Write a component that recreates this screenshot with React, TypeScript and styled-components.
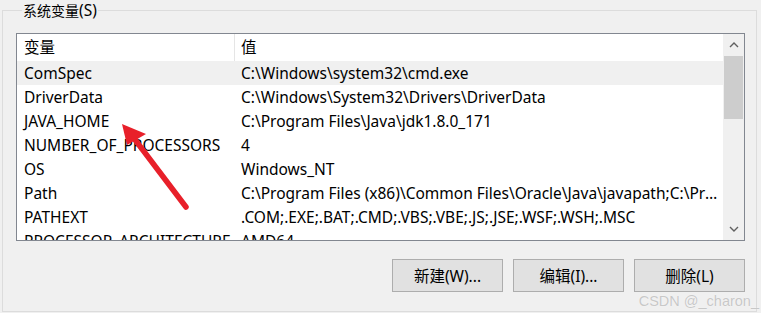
import * as React from 'react';
import styled, { createGlobalStyle } from 'styled-components';

const GlobalStyle = createGlobalStyle`
    html, body {
        margin: 0;
        padding: 0;
        background: #f0f0f0;
    }
    body {
        font-family: "Noto Sans", "Noto Sans CJK SC", sans-serif;
        font-size: 15.5px;
        color: #000;
    }
`;

const Page = styled.div`
    position: relative;
    width: 761px;
    height: 313px;
    overflow: hidden;
    background: #f0f0f0;
`;

const GroupBox = styled.fieldset`
    box-sizing: border-box;
    width: 755px;
    height: 312px;
    margin: 0 0 0 2px;
    padding: 0 0 0 13px;
    border: 1px solid #dcdcdc;
    display: flex;
    flex-direction: column;
`;

const GroupTitle = styled.legend`
    margin-left: 6px;
    padding: 0 1px;
    line-height: 20px;
    font-size: 15.5px;
`;

const Han = styled.span`
    font-size: 14px;
`;

const ListBox = styled.div`
    box-sizing: border-box;
    width: 729px;
    height: 208px;
    margin-top: 12px;
    border: 1px solid #828790;
    background: #fff;
    display: flex;
`;

const ListMain = styled.div`
    flex: 1;
    overflow: hidden;
`;

const HeaderRow = styled.div`
    display: grid;
    grid-template-columns: 217px 1fr;
    height: 27px;
    line-height: 27px;
    background: #fff;
`;

const Row = styled.div<{ $selected?: boolean }>`
    display: grid;
    grid-template-columns: 217px 1fr;
    height: 24px;
    line-height: 24px;
    background: ${p => (p.$selected ? '#f0f0f0' : '#fff')};
`;

const NameCell = styled.div`
    padding-left: 7px;
    white-space: nowrap;
    overflow: hidden;
`;

const ValueCell = styled.div<{ $header?: boolean }>`
    border-left: 1px solid ${p => (p.$header ? '#e5e5e5' : 'transparent')};
    padding: 0 3px 0 6px;
    white-space: nowrap;
    overflow: hidden;
    text-overflow: ellipsis;
`;

const Scrollbar = styled.div`
    width: 21px;
    background: #f0f0f0;
    display: flex;
    flex-direction: column;
`;

const ScrollArrow = styled.div`
    height: 22px;
    display: flex;
    align-items: center;
    justify-content: center;
`;

const ScrollTrack = styled.div`
    flex: 1;
    padding: 0 1px;
`;

const ScrollThumb = styled.div`
    height: 63px;
    background: #cdcdcd;
`;

const ButtonRow = styled.div`
    display: flex;
    justify-content: flex-end;
    gap: 10px;
    width: 729px;
    margin-top: 18px;
`;

const Button = styled.button`
    box-sizing: border-box;
    width: 111px;
    height: 33px;
    background: #e1e1e1;
    border: 1px solid #adadad;
    font-family: inherit;
    font-size: 15.5px;
    color: #000;
    padding: 0;
`;

const Watermark = styled.div`
    position: absolute;
    right: 2px;
    bottom: 4px;
    font-family: "Liberation Sans", sans-serif;
    font-size: 14.5px;
    color: #c8c8c8;
    text-shadow: 0 0 1px #fff;
`;

const ArrowLayer = styled.svg`
    position: absolute;
    left: 0;
    top: 0;
    pointer-events: none;
`;

const Chevron = ({ up }: { up?: boolean }) => (
    <svg width="10" height="6" viewBox="0 0 10 6">
        <path
            d={up ? 'M1 5 L5 1 L9 5' : 'M1 1 L5 5 L9 1'}
            fill="none"
            stroke="#606060"
            strokeWidth="1.4"
        />
    </svg>
);

const rows: [string, string][] = [
    ['ComSpec', 'C:\\Windows\\system32\\cmd.exe'],
    ['DriverData', 'C:\\Windows\\System32\\Drivers\\DriverData'],
    ['JAVA_HOME', 'C:\\Program Files\\Java\\jdk1.8.0_171'],
    ['NUMBER_OF_PROCESSORS', '4'],
    ['OS', 'Windows_NT'],
    ['Path', 'C:\\Program Files (x86)\\Common Files\\Oracle\\Java\\javapath;C:\\Program Files\\Java\\jdk1.8.0_171\\bin'],
    ['PATHEXT', '.COM;.EXE;.BAT;.CMD;.VBS;.VBE;.JS;.JSE;.WSF;.WSH;.MSC'],
    ['PROCESSOR_ARCHITECTURE', 'AMD64'],
];

export default function App() {
    return (
        <Page>
            <GlobalStyle />
            <GroupBox>
                <GroupTitle><Han>系统变量</Han>(S)</GroupTitle>
                <ListBox>
                    <ListMain>
                        <HeaderRow>
                            <NameCell>变量</NameCell>
                            <ValueCell $header>值</ValueCell>
                        </HeaderRow>
                        {rows.map(([name, value], index) => (
                            <Row key={name} $selected={index === 0}>
                                <NameCell>{name}</NameCell>
                                <ValueCell>{value}</ValueCell>
                            </Row>
                        ))}
                    </ListMain>
                    <Scrollbar>
                        <ScrollArrow><Chevron up /></ScrollArrow>
                        <ScrollTrack><ScrollThumb /></ScrollTrack>
                        <ScrollArrow><Chevron /></ScrollArrow>
                    </Scrollbar>
                </ListBox>
                <ButtonRow>
                    <Button>新建(W)...</Button>
                    <Button>编辑(I)...</Button>
                    <Button>删除(L)</Button>
                </ButtonRow>
            </GroupBox>
            <Watermark>CSDN @_charon_</Watermark>
            <ArrowLayer width="761" height="313" viewBox="0 0 761 313">
                <line x1="186" y1="207" x2="133" y2="137" stroke="#e8202a" strokeWidth="5.5" strokeLinecap="round" />
                <polygon points="122,124 146,134 127,145" fill="#e8202a" />
            </ArrowLayer>
        </Page>
    );
}
